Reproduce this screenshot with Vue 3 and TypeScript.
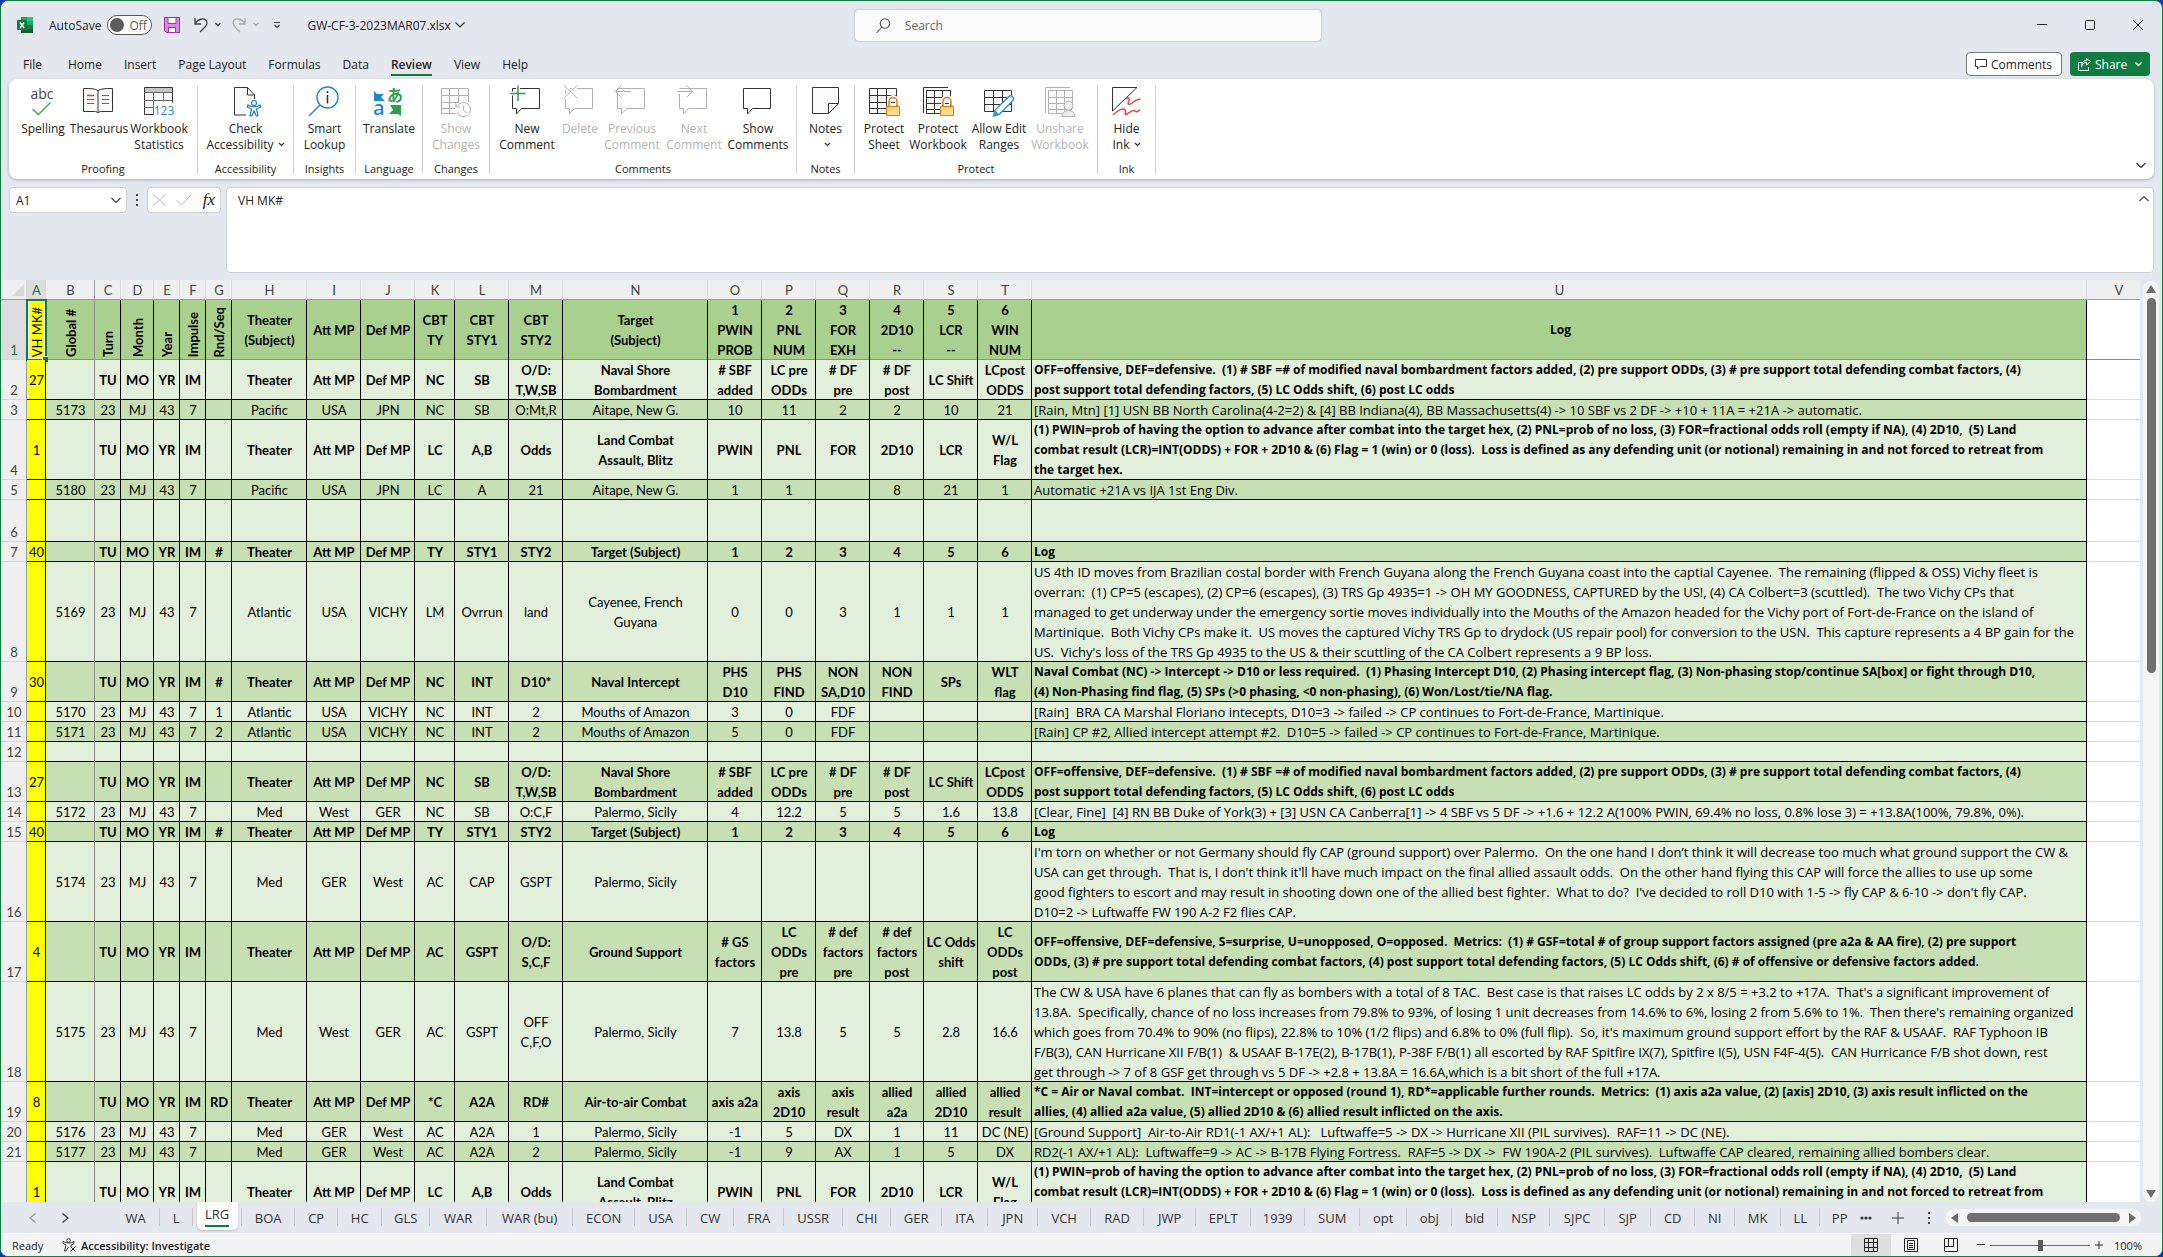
<script setup lang="ts">
import { ref } from 'vue'

interface Tool { label: string; icon: string; width: number; disabled?: boolean; menu?: boolean }
interface Group { name: string; width: number; tools: Tool[] }
interface Row { height: number; head?: boolean; cells: string[]; log: string }

const menus = ['File', 'Home', 'Insert', 'Page Layout', 'Formulas', 'Data', 'Review', 'View', 'Help']
const activeMenu = ref('Review')

const bubble = '<path d="M2.5 3.5h27v20H11.500l-5 5.500v-5.500h-4z"/>'
const lock = '<path d="M22 20v-4a4 4 0 0 1 8 0v4" stroke="#fff" stroke-width="4"/><path d="M22 21v-4.500a4 4 0 0 1 8 0V21" stroke="#e07b10" stroke-width="1.500"/><path d="M19.500 21.500h13v9h-13z" fill="#fadb8b" stroke="#e07b10"/>'
const sheet = '<path d="M2.500 3.500h27v20l-5 5h-22z" fill="#fafafa"/><path d="M2.500 10.500h27M2.500 17.500h27M2.500 23.500h20M10.500 3.500v25M19.500 3.500v25"/>'
const book = '<path d="M2.500 28V2.500H27"/><path d="M5.500 5.500h24v18l-5 5h-19z" fill="#fafafa"/><path d="M5.500 12.500h24M5.500 18.500h24M5.500 24.500h18M13.500 5.500v23M21.500 5.500v23"/>'

const icons: Record<string, string> = {
  spelling: '<text x="16" y="14" text-anchor="middle" font-size="14" fill="#444" stroke="none">abc</text><path d="M6.500 24l6 5.500 12-12" stroke="#3aa655" stroke-width="1.400"/>',
  thesaurus: '<path d="M16 5.500c-3-2-8-2-14.500-2v23h11c2 0 3.500 1 3.500 1.500 0-.5 1.500-1.500 3.500-1.500h11v-23c-6.500 0-11.500 0-14.500 2zM16 5.500V28" fill="#fafafa"/><path d="M5 10.500h7" stroke="#e8342f" stroke-width="1.500"/><path d="M5 14.500h7M5 18.500h7M20 10.500h7M20 14.500h7M20 18.500h7" stroke="#666"/>',
  statistics: '<path d="M2.500 2.500h28v27h-28z" fill="#fafafa"/><path d="M3 3h27v4H3z" fill="#c6c6c6" stroke="none"/><path d="M2.500 7.500h28M2.500 15.500h28M2.500 22.500h10M11.500 7.500v22M21.500 7.500v9" stroke="#666"/><path d="M12 17.500h20V32H12z" fill="#fff" stroke="none"/><text x="22" y="30" text-anchor="middle" font-size="12" fill="#1f88d0" stroke="none">123</text>',
  check: '<path d="M17 30H5.500V2.500h13l7 7.500v4M18.500 2.500V10h7" fill="#fafafa"/><g stroke="#1f7fc8" stroke-width="1.200" fill="#fff"><path d="M19 20c2 1.500 4 1.800 6 1.800s4-.3 6-1.800l.8 2-4.300 2 1.500 6.500-1.700.5-2.300-5-2.300 5-1.700-.5 1.500-6.500-4.300-2z"/><circle cx="25" cy="18" r="2.500"/></g>',
  lookup: '<circle cx="19.500" cy="12.500" r="10.500" stroke="#1f88d0" stroke-width="1.400" fill="#fafafa"/><path d="M12 20L1 31" stroke="#1f88d0" stroke-width="1.400"/><path d="M19.500 10v8.500M19.500 6v2" stroke-width="1.500"/>',
  translate: '<path d="M2 6l3 3h7l-3 3 4 4H2z" fill="#1f88d0" stroke="none"/><text x="15" y="16" font-size="16" font-weight="700" font-family="Noto Sans CJK JP" fill="#2f9e4f" stroke="none">あ</text><text x="1" y="30" font-size="20" font-weight="600" fill="#1f88d0" stroke="none">a</text><path d="M18 20h11v11l-3-2h-9l4-4z" fill="#2f9e4f" stroke="none"/>',
  changes: sheet + '<circle cx="24.500" cy="24.500" r="8.500" fill="#fff" stroke="none"/><path d="M18.500 21a7 7 0 1 1-.5 6M17 17.500v4.500h4.500M24.500 20.500v4.500l3 3"/>',
  add: bubble + '<path d="M8 1v15M.500 8.500h15" stroke="#fff" stroke-width="4"/><path d="M8 .500v15.500M.500 8.500h15" stroke="#2f9e4f" stroke-width="1.500"/>',
  remove: bubble + '<path d="M1 1l13 12M14 1L1 13" stroke="#fff" stroke-width="4"/><path d="M1 .500l13 12.500M14 .500L1 13"/>',
  previous: bubble + '<path d="M0 6.500h16" stroke="#fff" stroke-width="5"/><path d="M.500 6.500H16M6.500.500l-6 6 6 6"/>',
  next: bubble + '<path d="M0 6.500h16" stroke="#fff" stroke-width="5"/><path d="M0 6.500h15.500M9.500.500l6 6-6 6"/>',
  comments: bubble,
  notes: '<path d="M3.500 2.500h26v16l-10 10h-16zM29.500 18.500h-10v10" fill="#fafafa"/>',
  protectSheet: sheet + lock,
  protectBook: book + lock,
  ranges: '<path d="M2.500 5.500h27v21h-27z" fill="#fafafa"/><path d="M2.500 12.500h27M2.500 19.500h27M11.500 5.500v21M20.500 5.500v21"/><path d="M11.500 31l1.500-6 14-13.500c2-2 6 1.500 4 4L17 29.500z" fill="#fff" stroke="#2b93d8" stroke-width="1.400"/><path d="M11.500 31l1.500-6 4 4.500z" fill="#2b93d8" stroke="none"/>',
  unshare: book + '<circle cx="25.500" cy="20.500" r="4.500" fill="#eee"/><path d="M19 31.500c0-8 13-8 13 0z" fill="#eee"/>',
  ink: '<path d="M2.500 2.500H27L2.500 26z" fill="#fafafa"/><path d="M16 14c3-3 4 0 2.500 3s2 3 5 0 4-2 7-3M3 30c4-4 10-8 12-5s-2 6 2 4 6-5 8-3 3 0 5-1" stroke="#ee4444" stroke-width="1.500"/>',
}

const groups: Group[] = [
  { name: 'Proofing', width: 189, tools: [
    { label: 'Spelling', icon: 'spelling', width: 54 },
    { label: 'Thesaurus', icon: 'thesaurus', width: 58 },
    { label: 'Workbook\nStatistics', icon: 'statistics', width: 62 }] },
  { name: 'Accessibility', width: 96, tools: [{ label: 'Check\nAccessibility', icon: 'check', width: 88, menu: true }] },
  { name: 'Insights', width: 62, tools: [{ label: 'Smart\nLookup', icon: 'lookup', width: 54 }] },
  { name: 'Language', width: 67, tools: [{ label: 'Translate', icon: 'translate', width: 58 }] },
  { name: 'Changes', width: 67, tools: [{ label: 'Show\nChanges', icon: 'changes', width: 58, disabled: true }] },
  { name: 'Comments', width: 307, tools: [
    { label: 'New\nComment', icon: 'add', width: 64 },
    { label: 'Delete', icon: 'remove', width: 42, disabled: true },
    { label: 'Previous\nComment', icon: 'previous', width: 62, disabled: true },
    { label: 'Next\nComment', icon: 'next', width: 62, disabled: true },
    { label: 'Show\nComments', icon: 'comments', width: 66 }] },
  { name: 'Notes', width: 58, tools: [{ label: 'Notes\n', icon: 'notes', width: 42, menu: true }] },
  { name: 'Protect', width: 243, tools: [
    { label: 'Protect\nSheet', icon: 'protectSheet', width: 46 },
    { label: 'Protect\nWorkbook', icon: 'protectBook', width: 62 },
    { label: 'Allow Edit\nRanges', icon: 'ranges', width: 60 },
    { label: 'Unshare\nWorkbook', icon: 'unshare', width: 62, disabled: true }] },
  { name: 'Ink', width: 58, tools: [{ label: 'Hide\nInk', icon: 'ink', width: 42, menu: true }] },
]

const columns: { name: string; width?: number }[] = [
  { name: 'A', width: 19 }, { name: 'B', width: 49 }, { name: 'C', width: 26 }, { name: 'D', width: 33 },
  { name: 'E', width: 26 }, { name: 'F', width: 26 }, { name: 'G', width: 26 }, { name: 'H', width: 75 },
  { name: 'I', width: 54 }, { name: 'J', width: 54 }, { name: 'K', width: 40 }, { name: 'L', width: 54 },
  { name: 'M', width: 54 }, { name: 'N', width: 145 }, { name: 'O', width: 54 }, { name: 'P', width: 54 },
  { name: 'Q', width: 54 }, { name: 'R', width: 54 }, { name: 'S', width: 54 }, { name: 'T', width: 54 },
  { name: 'U' }, { name: 'V', width: 64 },
]

const split = (text: string): string[] => text.split('|').map((part) => part.replace(/~/g, '\n'))

const bombardLog = 'OFF=offensive, DEF=defensive.  (1) # SBF =# of modified naval bombardment factors added, (2) pre support ODDs, (3) # pre support total defending combat factors, (4)\npost support total defending factors, (5) LC Odds shift, (6) post LC odds'
const landLog = '(1) PWIN=prob of having the option to advance after combat into the target hex, (2) PNL=prob of no loss, (3) FOR=fractional odds roll (empty if NA), (4) 2D10,  (5) Land\ncombat result (LCR)=INT(ODDS) + FOR + 2D10 & (6) Flag = 1 (win) or 0 (loss).  Loss is defined as any defending unit (or notional) remaining in and not forced to retreat from\nthe target hex.'

const rows: Row[] = [
  { height: 60, head: true, cells: split('VH MK#|Global #|Turn|Month|Year|Impulse|Rnd/Seq|Theater~(Subject)|Att MP|Def MP|CBT~TY|CBT~STY1|CBT~STY2|Target~(Subject)|1~PWIN~PROB|2~PNL~NUM|3~FOR~EXH|4~2D10~--|5~LCR~--|6~WIN~NUM'), log: 'Log' },
  { height: 40, head: true, cells: split('27||TU|MO|YR|IM||Theater|Att MP|Def MP|NC|SB|O/D:~T,W,SB|Naval Shore~Bombardment|# SBF~added|LC pre~ODDs|# DF~pre|# DF~post|LC Shift|LCpost~ODDS'), log: bombardLog },
  { height: 20, cells: split('|5173|23|MJ|43|7||Pacific|USA|JPN|NC|SB|O:Mt,R|Aitape, New G.|10|11|2|2|10|21'), log: '[Rain, Mtn] [1] USN BB North Carolina(4-2=2) & [4] BB Indiana(4), BB Massachusetts(4) -> 10 SBF vs 2 DF -> +10 + 11A = +21A -> automatic.' },
  { height: 60, head: true, cells: split('1||TU|MO|YR|IM||Theater|Att MP|Def MP|LC|A,B|Odds|Land Combat~Assault, Blitz|PWIN|PNL|FOR|2D10|LCR|W/L~Flag'), log: landLog },
  { height: 20, cells: split('|5180|23|MJ|43|7||Pacific|USA|JPN|LC|A|21|Aitape, New G.|1|1||8|21|1'), log: 'Automatic +21A vs IJA 1st Eng Div.' },
  { height: 42, cells: split('|||||||||||||||||||'), log: '' },
  { height: 20, head: true, cells: split('40||TU|MO|YR|IM|#|Theater|Att MP|Def MP|TY|STY1|STY2|Target (Subject)|1|2|3|4|5|6'), log: 'Log' },
  { height: 100, cells: split('|5169|23|MJ|43|7||Atlantic|USA|VICHY|LM|Ovrrun|land|Cayenee, French~Guyana|0|0|3|1|1|1'), log: 'US 4th ID moves from Brazilian costal border with French Guyana along the French Guyana coast into the captial Cayenee.  The remaining (flipped & OSS) Vichy fleet is\noverran:  (1) CP=5 (escapes), (2) CP=6 (escapes), (3) TRS Gp 4935=1 -> OH MY GOODNESS, CAPTURED by the US!, (4) CA Colbert=3 (scuttled).  The two Vichy CPs that\nmanaged to get underway under the emergency sortie moves individually into the Mouths of the Amazon headed for the Vichy port of Fort-de-France on the island of\nMartinique.  Both Vichy CPs make it.  US moves the captured Vichy TRS Gp to drydock (US repair pool) for conversion to the USN.  This capture represents a 4 BP gain for the\nUS.  Vichy\'s loss of the TRS Gp 4935 to the US & their scuttling of the CA Colbert represents a 9 BP loss.' },
  { height: 40, head: true, cells: split('30||TU|MO|YR|IM|#|Theater|Att MP|Def MP|NC|INT|D10*|Naval Intercept|PHS~D10|PHS~FIND|NON~SA,D10|NON~FIND|SPs|WLT~flag'), log: 'Naval Combat (NC) -> Intercept -> D10 or less required.  (1) Phasing Intercept D10, (2) Phasing intercept flag, (3) Non-phasing stop/continue SA[box] or fight through D10,\n(4) Non-Phasing find flag, (5) SPs (>0 phasing, <0 non-phasing), (6) Won/Lost/tie/NA flag.' },
  { height: 20, cells: split('|5170|23|MJ|43|7|1|Atlantic|USA|VICHY|NC|INT|2|Mouths of Amazon|3|0|FDF|||'), log: '[Rain]  BRA CA Marshal Floriano intecepts, D10=3 -> failed -> CP continues to Fort-de-France, Martinique.' },
  { height: 20, cells: split('|5171|23|MJ|43|7|2|Atlantic|USA|VICHY|NC|INT|2|Mouths of Amazon|5|0|FDF|||'), log: '[Rain] CP #2, Allied intercept attempt #2.  D10=5 -> failed -> CP continues to Fort-de-France, Martinique.' },
  { height: 20, cells: split('|||||||||||||||||||'), log: '' },
  { height: 40, head: true, cells: split('27||TU|MO|YR|IM||Theater|Att MP|Def MP|NC|SB|O/D:~T,W,SB|Naval Shore~Bombardment|# SBF~added|LC pre~ODDs|# DF~pre|# DF~post|LC Shift|LCpost~ODDS'), log: bombardLog },
  { height: 20, cells: split('|5172|23|MJ|43|7||Med|West|GER|NC|SB|O:C,F|Palermo, Sicily|4|12.2|5|5|1.6|13.8'), log: '[Clear, Fine]  [4] RN BB Duke of York(3) + [3] USN CA Canberra[1] -> 4 SBF vs 5 DF -> +1.6 + 12.2 A(100% PWIN, 69.4% no loss, 0.8% lose 3) = +13.8A(100%, 79.8%, 0%).' },
  { height: 20, head: true, cells: split('40||TU|MO|YR|IM|#|Theater|Att MP|Def MP|TY|STY1|STY2|Target (Subject)|1|2|3|4|5|6'), log: 'Log' },
  { height: 80, cells: split('|5174|23|MJ|43|7||Med|GER|West|AC|CAP|GSPT|Palermo, Sicily||||||'), log: 'I\'m torn on whether or not Germany should fly CAP (ground support) over Palermo.  On the one hand I don’t think it will decrease too much what ground support the CW &\nUSA can get through.  That is, I don\'t think it\'ll have much impact on the final allied assault odds.  On the other hand flying this CAP will force the allies to use up some\ngood fighters to escort and may result in shooting down one of the allied best fighter.  What to do?  I\'ve decided to roll D10 with 1-5 -> fly CAP & 6-10 -> don\'t fly CAP.\nD10=2 -> Luftwaffe FW 190 A-2 F2 flies CAP.' },
  { height: 60, head: true, cells: split('4||TU|MO|YR|IM||Theater|Att MP|Def MP|AC|GSPT|O/D:~S,C,F|Ground Support|# GS~factors|LC~ODDs~pre|# def~factors~pre|# def~factors~post|LC Odds~shift|LC~ODDs~post'), log: 'OFF=offensive, DEF=defensive, S=surprise, U=unopposed, O=opposed.  Metrics:  (1) # GSF=total # of group support factors assigned (pre a2a & AA fire), (2) pre support\nODDs, (3) # pre support total defending combat factors, (4) post support total defending factors, (5) LC Odds shift, (6) # of offensive or defensive factors added.' },
  { height: 100, cells: split('|5175|23|MJ|43|7||Med|West|GER|AC|GSPT|OFF~C,F,O|Palermo, Sicily|7|13.8|5|5|2.8|16.6'), log: 'The CW & USA have 6 planes that can fly as bombers with a total of 8 TAC.  Best case is that raises LC odds by 2 x 8/5 = +3.2 to +17A.  That\'s a significant improvement of\n13.8A.  Specifically, chance of no loss increases from 79.8% to 93%, of losing 1 unit decreases from 14.6% to 6%, losing 2 from 5.6% to 1%.  Then there\'s remaining organized\nwhich goes from 70.4% to 90% (no flips), 22.8% to 10% (1/2 flips) and 6.8% to 0% (full flip).  So, it\'s maximum ground support effort by the RAF & USAAF.  RAF Typhoon IB\nF/B(3), CAN Hurricane XII F/B(1)  & USAAF B-17E(2), B-17B(1), P-38F F/B(1) all escorted by RAF Spitfire IX(7), Spitfire I(5), USN F4F-4(5).  CAN Hurricance F/B shot down, rest\nget through -> 7 of 8 GSF get through vs 5 DF -> +2.8 + 13.8A = 16.6A,which is a bit short of the full +17A.' },
  { height: 40, head: true, cells: split('8||TU|MO|YR|IM|RD|Theater|Att MP|Def MP|*C|A2A|RD#|Air-to-air Combat|axis a2a|axis~2D10|axis~result|allied~a2a|allied~2D10|allied~result'), log: '*C = Air or Naval combat.  INT=intercept or opposed (round 1), RD*=applicable further rounds.  Metrics:  (1) axis a2a value, (2) [axis] 2D10, (3) axis result inflicted on the\nallies, (4) allied a2a value, (5) allied 2D10 & (6) allied result inflicted on the axis.' },
  { height: 20, cells: split('|5176|23|MJ|43|7||Med|GER|West|AC|A2A|1|Palermo, Sicily|-1|5|DX|1|11|DC (NE)'), log: '[Ground Support]  Air-to-Air RD1(-1 AX/+1 AL):   Luftwaffe=5 -> DX -> Hurricane XII (PIL survives).  RAF=11 -> DC (NE).' },
  { height: 20, cells: split('|5177|23|MJ|43|7||Med|GER|West|AC|A2A|2|Palermo, Sicily|-1|9|AX|1|5|DX'), log: 'RD2(-1 AX/+1 AL):  Luftwaffe=9 -> AC -> B-17B Flying Fortress.  RAF=5 -> DX ->  FW 190A-2 (PIL survives).  Luftwaffe CAP cleared, remaining allied bombers clear.' },
  { height: 60, head: true, cells: split('1||TU|MO|YR|IM||Theater|Att MP|Def MP|LC|A,B|Odds|Land Combat~Assault, Blitz|PWIN|PNL|FOR|2D10|LCR|W/L~Flag'), log: landLog },
]

const sheets: [string, number][] = [
  ['WA', 48], ['L', 33], ['LRG', 49], ['BOA', 53], ['CP', 43], ['HC', 44], ['GLS', 48], ['WAR', 57], ['WAR (bu)', 86],
  ['ECON', 62], ['USA', 52], ['CW', 47], ['FRA', 50], ['USSR', 59], ['CHI', 48], ['GER', 51], ['ITA', 46], ['JPN', 50],
  ['VCH', 53], ['RAD', 53], ['JWP', 52], ['EPLT', 55], ['1939', 54], ['SUM', 55], ['opt', 47], ['obj', 45], ['bid', 46],
  ['NSP', 52], ['SJPC', 55], ['SJP', 46], ['CD', 44], ['NI', 40], ['MK', 46], ['LL', 39], ['PP', 40],
]
const activeSheet = ref('LRG')
const zoom = ref(50)
const search = ref('')
const cellName = ref('A1')
const formula = ref('VH MK#')
const autoSave = ref(false)
</script>

<template>
  <div class="window">
    <header class="titlebar">
      <svg class="logo" width="16" height="16" viewBox="0 0 16 16">
        <path d="M4 0h12v16H4z" fill="#21a366" /><path d="M4 8h6v8H4z" fill="#185c37" /><path d="M10 8h6v4h-6z" fill="#107c41" /><path d="M10 0h6v4h-6z" fill="#33c481" /><path d="M10 12h6v4H4v-4z" fill="#185c37" />
        <rect y="3" width="10" height="10" rx="1" fill="#107c41" /><path d="M3 5.500l4 5.500M7 5.500L3 11" stroke="#fff" stroke-width="1.500" />
      </svg>
      <label class="autosave">AutoSave
        <span class="toggle"><input v-model="autoSave" type="checkbox"><span class="off">Off</span></span>
      </label>
      <button class="plain save" aria-label="Save">
        <svg width="16" height="16" viewBox="0 0 16 16" fill="#d68ae0" stroke="#9b2fa8"><path d="M.5.5h15v15H2.500l-2-2z" /><path d="M4 .5h8v6H4zM4.500 10.500h7v5h-7z" fill="#fff" /></svg>
      </button>
      <button class="plain undo" aria-label="Undo">
        <svg width="30" height="18" viewBox="0 0 30 18" fill="none" stroke="#444" stroke-width="1.300"><path d="M2 2v6h6M2 8C5 2 14 1 14 7c0 3-4 6-7 9" /><path d="M22.500 7l2.500 2.500L27.500 7" /></svg>
      </button>
      <button class="plain redo" aria-label="Redo">
        <svg width="30" height="18" viewBox="0 0 30 18" fill="none" stroke="#aaa" stroke-width="1.300"><path d="M14 2v6H8M14 8C11 2 2 1 2 7c0 3 4 6 7 9" /><path d="M22.500 7l2.500 2.500L27.500 7" /></svg>
      </button>
      <button class="plain custom" aria-label="Customize toolbar">
        <svg width="8" height="8" viewBox="0 0 8 8" fill="none" stroke="#333" stroke-width="1.200"><path d="M1 1.500h6M1.500 4L4 6.500 6.500 4" /></svg>
      </button>
      <button class="plain file"><span>GW-CF-3-2023MAR07.xlsx</span>
        <svg width="10" height="6" viewBox="0 0 10 6" fill="none" stroke="#333" stroke-width="1.200"><path d="M.5.5L5 5 9.500.5" /></svg>
      </button>
      <label class="search">
        <svg width="15" height="16" viewBox="0 0 15 16" fill="none" stroke="#555" stroke-width="1.100"><circle cx="9" cy="5.500" r="4.700" /><path d="M6 9L.5 15" /></svg>
        <input v-model="search" type="text" placeholder="Search" aria-label="Search">
      </label>
      <div class="controls">
        <button class="plain" aria-label="Minimize"><svg width="10" height="10"><path d="M0 4.500h10" stroke="#222" /></svg></button>
        <button class="plain" aria-label="Maximize"><svg width="10" height="10"><rect x=".5" y=".5" width="9" height="9" rx="1" fill="none" stroke="#222" /></svg></button>
        <button class="plain" aria-label="Close"><svg width="10" height="10"><path d="M0 0l10 10M10 0L0 10" stroke="#222" /></svg></button>
      </div>
    </header>

    <nav class="menubar">
      <div class="menus">
        <button v-for="m in menus" :key="m" class="plain menu" :class="{ active: m === activeMenu }" @click="activeMenu = m">{{ m }}</button>
      </div>
      <button class="comments">
        <svg width="12" height="12" viewBox="0 0 12 12" fill="none" stroke="#333"><path d="M.5 1.500h11v7H5l-2.500 2.500V8.500h-2z" /></svg>Comments
      </button>
      <button class="share">
        <svg width="13" height="13" viewBox="0 0 13 13" fill="none" stroke="#fff"><path d="M4 4.500H.5v8h10V9M3.500 9c.5-3 2-4.500 5-4.500V7l4-3.500-4-3v2C5 2.500 3.500 5 3.500 9z" /></svg>Share
        <svg class="split" width="7" height="5" viewBox="0 0 7 5" fill="none" stroke="#fff" stroke-width="1.400"><path d="M.5.500L3.500 3.500 6.500.500" /></svg>
      </button>
    </nav>

    <section class="ribbon">
      <div v-for="g in groups" :key="g.name" class="group" :style="{ width: g.width + 'px' }">
        <div class="tools">
          <button v-for="t in g.tools" :key="t.icon" class="plain tool" :disabled="t.disabled" :style="{ width: t.width + 'px' }">
            <svg class="icon" width="34" height="34" viewBox="0 0 34 34" v-html="icons[t.icon]" />
            <span class="caption">{{ t.label }}<svg v-if="t.menu" class="caret" width="7" height="5" viewBox="0 0 7 5"><path d="M1 1l2.500 2.500L6 1" fill="none" stroke="#333" stroke-width="1.200" /></svg></span>
          </button>
        </div>
        <div class="group-name">{{ g.name }}</div>
      </div>
      <button class="plain collapse" aria-label="Collapse ribbon"><svg width="10" height="7" viewBox="0 0 10 7" fill="none" stroke="#333" stroke-width="1.200"><path d="M.5 1L5 5.500 9.500 1" /></svg></button>
    </section>

    <section class="formula-row">
      <div class="box name-box">
        <input v-model="cellName" type="text" aria-label="Name box">
        <svg width="10" height="7" viewBox="0 0 10 7" fill="none" stroke="#444" stroke-width="1.200"><path d="M.5 1L5 5.500 9.500 1" /></svg>
      </div>
      <div class="dots"><i /><i /><i /></div>
      <div class="box fx-box">
        <button class="plain" aria-label="Cancel"><svg width="13" height="12"><path d="M.5.500l12 11M12.500.500l-12 11" stroke="#b5b5b5" /></svg></button>
        <button class="plain" aria-label="Enter"><svg width="16" height="12"><path d="M.5 6l5 5L15.500.500" fill="none" stroke="#b5b5b5" /></svg></button>
        <button class="plain fx">fx</button>
      </div>
      <div class="box formula">
        <textarea v-model="formula" aria-label="Formula" />
        <svg width="10" height="7" viewBox="0 0 10 7" fill="none" stroke="#444" stroke-width="1.200"><path d="M.5 6L5 1.500 9.500 6" /></svg>
      </div>
    </section>

    <main class="workspace">
      <div class="grid">
        <table>
          <colgroup>
            <col class="number-col">
            <col v-for="c in columns" :key="c.name" :style="c.width ? { width: c.width + 'px' } : undefined">
          </colgroup>
          <thead>
            <tr>
              <th class="corner"><svg width="12" height="12"><path d="M12 0v12H0z" fill="#d8d8d8" /></svg></th>
              <th v-for="c in columns" :key="c.name" :class="['letter', 'letter-' + c.name]">{{ c.name }}</th>
            </tr>
          </thead>
          <tbody>
            <tr v-for="(r, i) in rows" :key="i" :class="{ top: i === 0, shade: i % 2 === 0, head: r.head }" :style="{ height: r.height + 'px' }">
              <th class="number">{{ i + 1 }}</th>
              <td v-for="(c, j) in r.cells" :key="j" :class="{ mark: j === 0, frozen: j === 1, upright: i === 0 && j < 7 }">
                <span>{{ c }}</span><i v-if="i === 0 && j === 0" class="selection" />
              </td>
              <td class="log">{{ r.log }}</td>
              <td class="empty" />
            </tr>
          </tbody>
        </table>
      </div>
      <div class="vscroll">
        <svg width="10" height="8"><path d="M5 0l5 8H0z" fill="#6b6b6b" /></svg>
        <div class="vtrack"><div class="vthumb" /></div>
        <svg width="10" height="8"><path d="M5 8L0 0h10z" fill="#6b6b6b" /></svg>
      </div>
    </main>

    <nav class="sheetbar">
      <div class="arrows">
        <button class="plain" aria-label="Previous sheets"><svg width="7" height="10"><path d="M6.500.500L1 5l5.500 4.500" fill="none" stroke="#999" stroke-width="1.200" /></svg></button>
        <button class="plain" aria-label="Next sheets"><svg width="7" height="10"><path d="M.5.500L6 5 .5 9.500" fill="none" stroke="#333" stroke-width="1.200" /></svg></button>
      </div>
      <div class="sheets">
        <button v-for="[name, w] in sheets" :key="name" class="plain sheet" :class="{ active: name === activeSheet }" :style="{ width: w + 'px' }" @click="activeSheet = name"><span>{{ name }}</span></button>
      </div>
      <button class="plain" aria-label="More sheets"><svg width="12" height="4" fill="#333"><circle cx="2" cy="2" r="1.600" /><circle cx="6" cy="2" r="1.600" /><circle cx="10" cy="2" r="1.600" /></svg></button>
      <button class="plain add" aria-label="New sheet"><svg width="12" height="12"><path d="M6 0v12M0 6h12" stroke="#333" /></svg></button>
      <div class="dots"><i /><i /><i /></div>
      <div class="hscroll">
        <svg width="7" height="10"><path d="M0 5l7-5v10z" fill="#6b6b6b" /></svg>
        <div class="hthumb" />
        <svg width="7" height="10"><path d="M7 5L0 0v10z" fill="#6b6b6b" /></svg>
      </div>
    </nav>

    <footer class="status">
      <span class="ready">Ready</span>
      <svg width="15" height="14" viewBox="0 0 15 14" fill="none" stroke="#333"><circle cx="6.500" cy="2.500" r="1.800" /><path d="M1 3.500c3 2 8 2 11 0v2L9 7l.5 1.500M1 3.500v2L4 7l-1.500 6h1.500L6.500 9M8.500 8.500l5 5M13.500 8.500l-5 5" /></svg>
      <button class="plain access">Accessibility: Investigate</button>
      <div class="views">
        <button class="plain on" aria-label="Normal view"><svg width="14" height="14" fill="none" stroke="#222"><path d="M.5.500h13v13H.5zM.5 4.500h13M.5 9.500h13M4.500.500v13M9.500.500v13" /></svg></button>
        <button class="plain" aria-label="Page layout view"><svg width="14" height="14" fill="none" stroke="#222"><path d="M.5.500h13v13H.5zM3.500 2.500h7v9h-7zM5 5.500h4M5 7.500h4M5 9.500h4" /></svg></button>
        <button class="plain" aria-label="Page break view"><svg width="14" height="14" fill="none" stroke="#222"><path d="M.5.500h13v13H.5zM.5 8.500h9V.500M4.500.500v8" /></svg></button>
      </div>
      <button class="plain" aria-label="Zoom out"><svg width="8" height="8"><path d="M0 3.500h8" stroke="#333" /></svg></button>
      <input v-model="zoom" class="zoom" type="range" min="0" max="100" aria-label="Zoom">
      <button class="plain" aria-label="Zoom in"><svg width="8" height="8"><path d="M0 4h8M4 0v8" stroke="#333" /></svg></button>
      <span class="percent">100%</span>
    </footer>
  </div>
</template>

<style>
html, body { margin: 0; background: #1238a8; }
</style>

<style scoped>
* { box-sizing: border-box; }
.window {
  height: 100vh; display: flex; flex-direction: column; overflow: hidden;
  border: 1px solid #107c41; border-radius: 8px; background: #e4e7ee;
  font-family: "Open Sans", "Noto Sans", sans-serif; font-size: 12px; color: #222;
}
button, input, textarea { font: inherit; color: inherit; }
.plain { border: 0; background: none; padding: 0; display: inline-flex; align-items: center; justify-content: center; white-space: nowrap; }
svg { flex: none; display: block; }

.titlebar { height: 48px; flex: none; display: flex; align-items: center; padding-left: 16px; }
.autosave { display: flex; align-items: center; gap: 6px; margin-left: 16px; }
.toggle { width: 45px; height: 20px; border: 1px solid #555; border-radius: 10px; background: #fff; display: flex; align-items: center; padding-left: 2px; gap: 5px; }
.toggle input { appearance: none; width: 14px; height: 14px; margin: 0; border-radius: 7px; background: #5c5c5c; }
.off { color: #555; }
.save { margin-left: 12px; }
.undo { margin-left: 13px; }
.redo { margin-left: 8px; }
.custom { margin-left: 12px; }
.file { margin-left: 26px; gap: 4px; }
.search { margin: 1px 0 0 390px; width: 466px; height: 31px; background: #fafafa; border-radius: 4px; box-shadow: 0 0 2px #999; display: flex; align-items: center; gap: 14px; padding-left: 21px; }
.search input { border: 0; background: none; outline: 0; padding: 0; flex: 1; }
.search input::placeholder { color: #666; opacity: 1; }
.controls { margin-left: auto; display: flex; }
.controls button { width: 48px; height: 48px; }

.menubar { height: 30px; flex: none; display: flex; padding: 3px 12px 3px 22px; }
.menus { display: flex; gap: 22px; flex: 1; }
.menu { border-bottom: 2px solid transparent; height: 24px; padding-top: 2px; }
.menu:first-child { margin-right: 4px; }
.menu.active { font-weight: 600; border-color: #107c41; }
.comments, .share { height: 24px; border-radius: 4px; display: flex; align-items: center; gap: 4px; padding: 0 8px; }
.comments { width: 96px; background: #fff; border: 1px solid #777; }
.share { width: 80px; margin-left: 8px; background: #107c41; border: 0; color: #fff; }
.split { margin-left: auto; }

.ribbon { margin: 0 8px; height: 100px; flex: none; background: #fff; border-radius: 8px; box-shadow: 0 1px 3px #a9adb5; display: flex; padding-top: 6px; position: relative; }
.group { height: 89px; border-right: 1px solid #d0d0d0; display: flex; flex-direction: column; align-items: center; }
.tools { display: flex; height: 76px; flex: none; align-items: flex-start; }
.tool { flex-direction: column; gap: 2px; }
.tool:disabled { color: #b4b4b4; }
.icon { overflow: visible; fill: none; stroke: #333; }
.tool:disabled .icon { stroke: #b0b0b0; }
.caption { white-space: pre; line-height: 16px; text-align: center; }
.caret { display: inline-block; margin-left: 4px; vertical-align: 2px; }
.group-name { font-size: 11px; line-height: 16px; }
.collapse { position: absolute; right: 8px; bottom: 10px; }

.formula-row { flex: none; display: flex; margin: 8px 8px 7px; height: 86px; align-items: flex-start; }
.box { background: #fff; border: 1px solid #cfd1d6; border-radius: 4px; display: flex; align-items: center; }
.name-box { width: 118px; height: 26px; padding: 0 5px 0 6px; }
.name-box input { border: 0; padding: 0; outline: 0; flex: 1; min-width: 0; background: none; }
.dots { display: flex; flex-direction: column; gap: 3px; align-items: center; }
.formula-row .dots { width: 20px; padding-top: 7px; }
.dots i { width: 2px; height: 2px; background: #444; }
.fx-box { width: 74px; height: 26px; padding: 0 5px; justify-content: space-between; }
.fx { font-family: "Liberation Serif", serif; font-style: italic; font-size: 17px; }
.formula { flex: 1; margin-left: 5px; height: 86px; padding: 3px 4px 0 11px; align-items: flex-start; }
.formula textarea { border: 0; outline: 0; padding: 0; resize: none; flex: 1; height: 78px; line-height: 20px; }
.formula svg { margin-top: 4px; }

.workspace { flex: 1; min-height: 0; display: flex; }
.grid { flex: 1; min-width: 0; overflow: hidden; background: #fff; font-family: Lato, sans-serif; font-size: 13px; line-height: 20px; color: #000; }
table { width: calc(100% + 11px); table-layout: fixed; border-collapse: separate; border-spacing: 0; }
.number-col { width: 26px; }
th, td { padding: 0; }
.corner, .letter { height: 20px; background: #efefef; color: #444; font-weight: 400; box-shadow: inset -1px 0 0 #dadada, inset 0 -1px 0 #9b9b9b; }
.corner svg { margin: 0 0 0 11px; }
.letter-A, .top .number { background: #dcdcdc; color: #1a7346; }
.letter-B { box-shadow: inset -1px -1px 0 #9b9b9b; }
.number { background: #efefef; color: #444; font-weight: 400; vertical-align: bottom; box-shadow: inset -1px 0 0 #9b9b9b, inset 0 -1px 0 #d6d6d6; }
td { background: #e2efda; text-align: center; vertical-align: middle; white-space: pre; overflow: hidden; box-shadow: inset -1px -1px 0 #000; }
.shade td { background: #c6e0b4; }
.top td { background: #a9d08e; box-shadow: inset -1px 0 0 #000, inset 0 -1px 0 #8c8c8c; }
.head td { font-weight: 700; }
tr .frozen { box-shadow: inset -1px 0 0 #8c8c8c, inset 0 -1px 0 #000; }
.top .frozen { box-shadow: inset -1px -1px 0 #8c8c8c; }
tr td.mark { background: #ff0; font-weight: 400; position: relative; overflow: visible; }
tr td.log { text-align: left; padding-left: 2px; font-family: "Open Sans", sans-serif; }
.head td.log { font-size: 12px; }
.top td.log { text-align: center; }
tr td.empty { background: #fff; box-shadow: inset 0 -1px 0 #d9d9d9; }
.top td.empty { box-shadow: inset 0 -1px 0 #8c8c8c; }
.upright { vertical-align: bottom; }
.upright span { display: inline-block; vertical-align: bottom; writing-mode: vertical-rl; transform: rotate(180deg); padding-top: 3px; margin: 0 -4px; }
.selection { position: absolute; inset: -1px; border: 2px solid #107c41; box-shadow: inset 0 0 0 1px #fff; }
.selection::after { content: ""; position: absolute; right: -3px; bottom: -3px; width: 5px; height: 5px; background: #107c41; border: 1px solid #fff; border-width: 1px 0 0 1px; }

.vscroll { width: 16px; margin: 1px 3px 0; background: #f5f5f5; border-radius: 8px; display: flex; flex-direction: column; align-items: center; padding: 4px 0; }
.vtrack { flex: 1; padding-top: 5px; }
.vthumb { width: 9px; height: 42%; background: #6f6f6f; border-radius: 5px; }

.sheetbar { flex: none; height: 32px; display: flex; align-items: center; padding-right: 21px; border-bottom: 1px solid #f8f8f8; font-size: 13px; color: #333; }
.arrows { width: 111px; padding-left: 28px; display: flex; gap: 26px; }
.sheets { display: flex; flex: 1; align-self: stretch; }
.sheet { height: 31px; position: relative; flex: none; }
.sheet:not(:last-child)::after { content: ""; position: absolute; right: 0; top: 6px; height: 18px; width: 1px; background: #c4c6cc; }
.sheet.active { height: 28px; padding: 0 4px; align-items: stretch; }
.sheet.active::before { content: ""; position: absolute; left: 4px; right: 4px; top: 0; bottom: 0; background: #fff; border-radius: 0 0 5px 5px; box-shadow: 0 1px 2px #bbb; }
.sheet.active span { position: relative; margin: 2px 0 3px; line-height: 20px; border-bottom: 2px solid #107c41; }
.add { margin: 0 24px 0 20px; }
.sheetbar .dots { margin-right: 16px; }
.hscroll { width: 196px; height: 17px; border-radius: 8px; background: #f5f5f5; display: flex; align-items: center; justify-content: space-between; padding: 0 5px; }
.hthumb { width: 153px; height: 9px; border-radius: 5px; background: #6f6f6f; }

.status { flex: none; height: 22px; background: #f3f3f3; display: flex; align-items: center; font-size: 11px; padding: 0 20px 0 11px; }
.ready { width: 50px; }
.access { margin-left: 4px; font-weight: 600; }
.views { margin: 0 6px 0 auto; display: flex; align-self: stretch; }
.views button { width: 40px; }
.views .on { background: #dedede; }
.zoom { appearance: none; width: 100px; height: 12px; margin: 0 5px; background: linear-gradient(#666, #666) center / 100% 1px no-repeat; }
.zoom::-webkit-slider-thumb { appearance: none; width: 5px; height: 11px; background: #5c5c5c; }
.percent { width: 39px; text-align: right; }
</style>
